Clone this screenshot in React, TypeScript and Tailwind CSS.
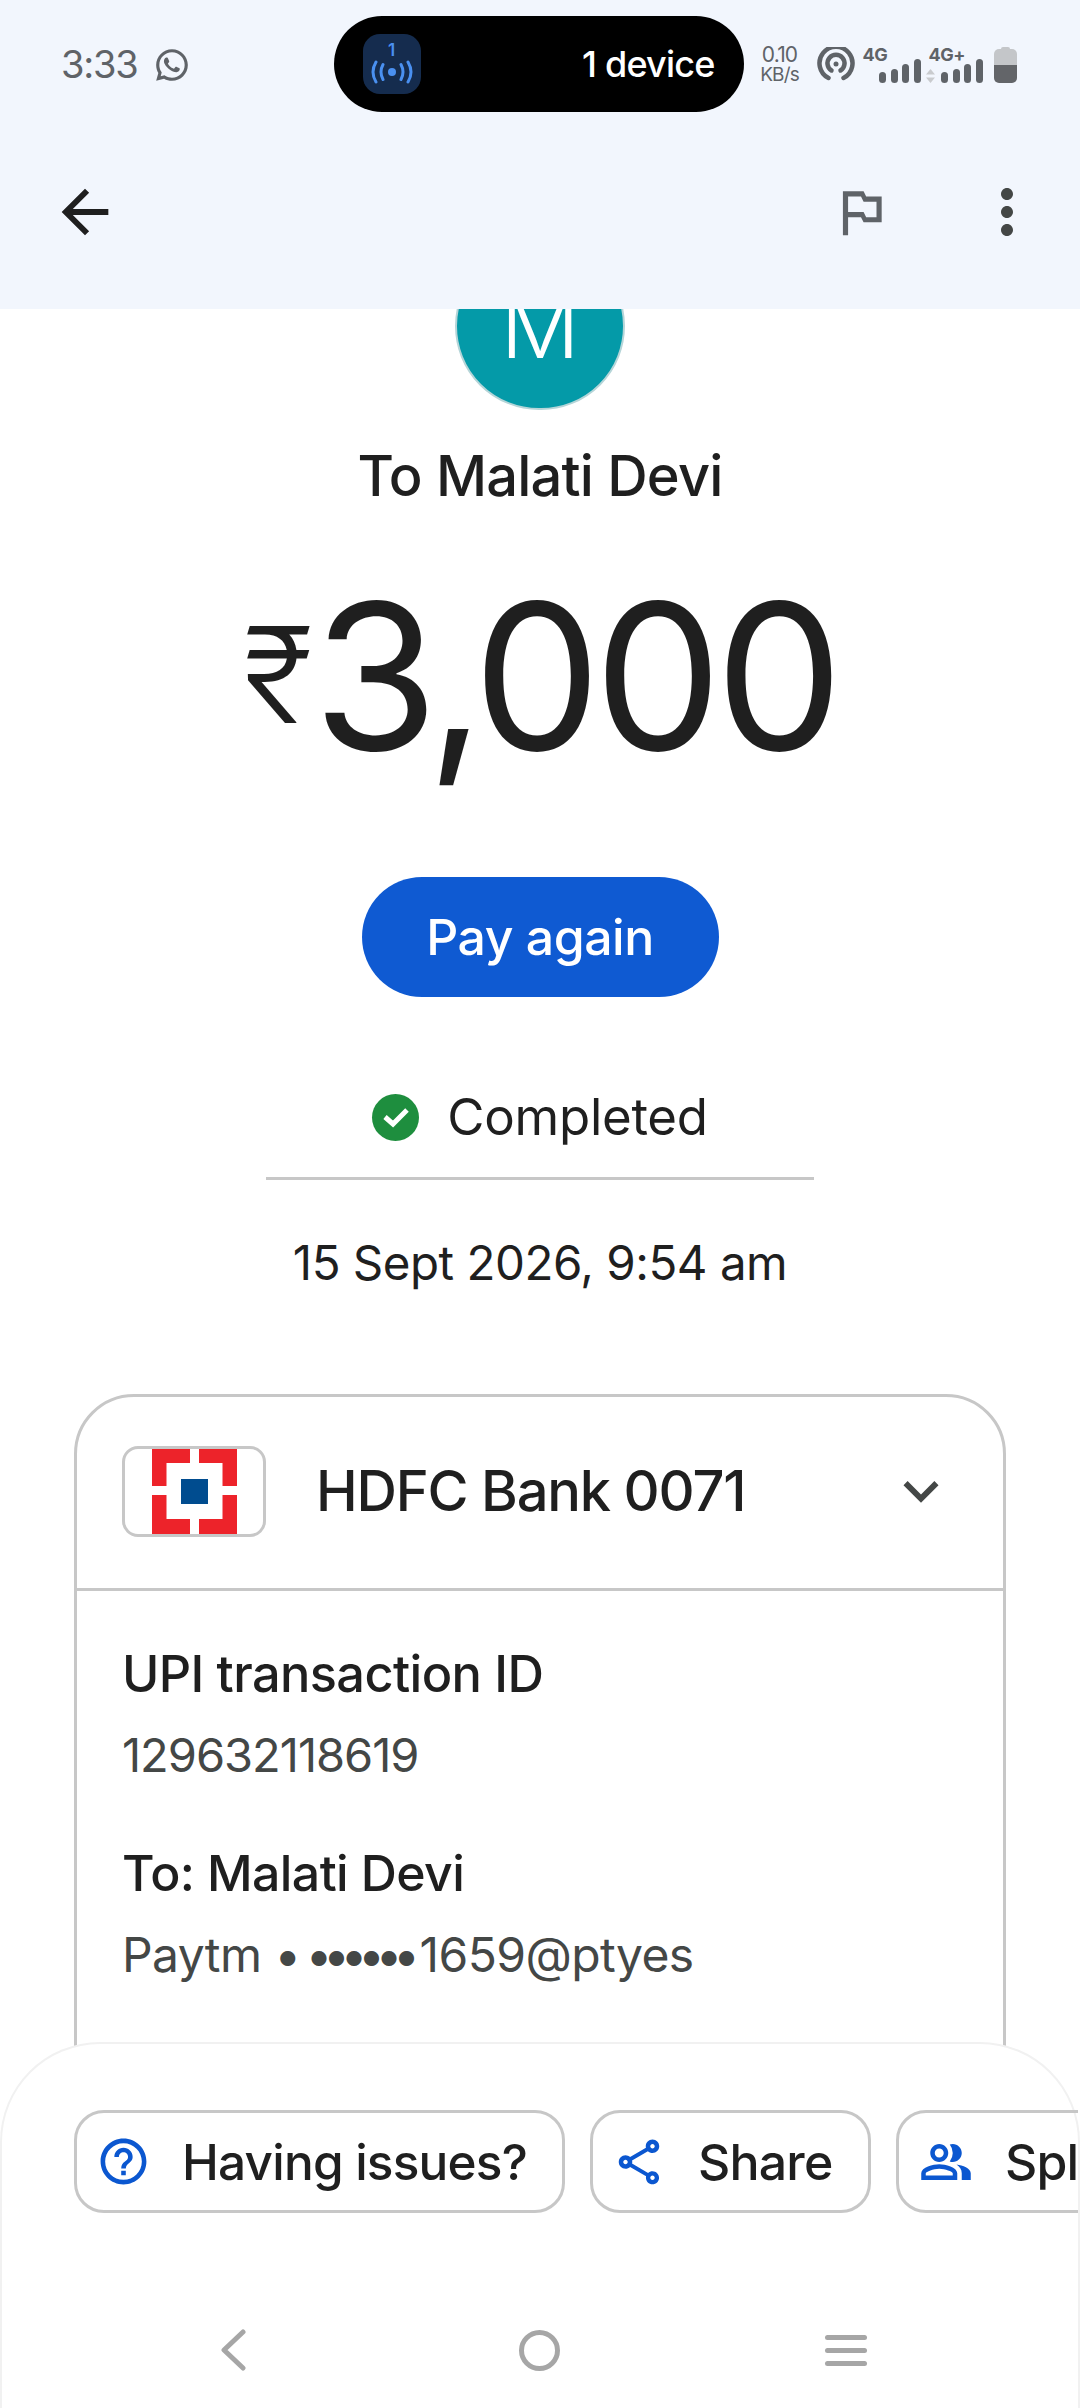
import { MdArrowBack, MdHelpOutline, MdKeyboardArrowDown, MdMoreVert, MdOutlinedFlag, MdOutlinePeopleAlt, MdOutlineShare } from "react-icons/md";
import { RiWhatsappLine } from "react-icons/ri";

function Bars({ fade }: { fade?: boolean }) {
  return (
    <div className="flex items-end gap-[4.5px]">
      {fade && (
        <svg width="9" height="14" viewBox="0 0 9 14" className="mr-[2px]">
          <path d="M4.5 0 9 5.5H0z M4.5 14 0 8.500H9z" fill="#c9cbce" />
        </svg>
      )}
      <div className="w-[7px] h-[11px] rounded-full bg-[#5f6368]" />
      <div className="w-[7px] h-[14px] rounded-full bg-[#5f6368]" />
      <div className="w-[7px] h-[19px] rounded-full bg-[#5f6368]" />
      <div className="w-[7px] h-[24px] rounded-full bg-[#5f6368]" />
    </div>
  );
}

function StatusBar() {
  return (
    <div className="flex items-center h-[96px] mt-[16px] text-[#5f6368]">
      <span className="ml-[61px] text-[38px] leading-[48px] tracking-[-1.2px]">3:33</span>
      <RiWhatsappLine className="ml-[15px] mt-[2px]" size={38} />
      {/* hotspot pill */}
      <div className="ml-[143px] w-[410px] h-[96px] rounded-full bg-black flex items-center justify-between pl-[29px] pr-[29px]">
        <div className="w-[58px] h-[60px] rounded-[17px] bg-[#152c4e] flex flex-col items-center text-[#4a90f0]">
          <span className="text-[17px] leading-[20px] mt-[6px] font-semibold">1</span>
          <svg width="42" height="24" viewBox="0 0 42 24" fill="none" stroke="#4a90f0" strokeWidth="3" strokeLinecap="round">
            <circle cx="21" cy="12" r="4" fill="#4a90f0" stroke="none" />
            <path d="M12 4.500Q8 12 12 19.500M30 4.500Q34 12 30 19.500M5 2Q-1 12 5 22M37 2Q43 12 37 22" />
          </svg>
        </div>
        <span className="text-[36px] leading-[44px] font-medium text-white tracking-[-0.8px]">1 device</span>
      </div>
      <div className="ml-[15px] w-[42px] flex flex-col items-center">
        <span className="text-[21px] leading-[21px] tracking-[-0.8px]">0.10</span>
        <span className="text-[19px] leading-[20px] tracking-[-0.8px]">KB/s</span>
      </div>
      <svg className="ml-[16px] mt-[2px]" width="38" height="36" viewBox="0 0 38 36" fill="none" stroke="#5f6368" strokeWidth="4.500" strokeLinecap="round">
        <circle cx="19" cy="17" r="2.500" fill="#5f6368" stroke="none" />
        <path d="M11.500 31A16.500 16.500 0 1 1 26.500 31" />
        <path d="M14.500 23.500A8.500 8.500 0 1 1 23.500 23.500" />
      </svg>
      <div className="ml-[8px] w-[58px] h-[36px] mt-[1px] flex flex-col">
        <span className="text-[18px] leading-[15px] font-bold tracking-[-0.5px] text-[#5f6368]">4G</span>
        <div className="flex justify-end -mt-[3px]"><Bars /></div>
      </div>
      <div className="ml-[8px] w-[54px] h-[36px] mt-[1px] flex flex-col">
        <span className="text-[18px] leading-[15px] font-bold tracking-[-0.5px] text-[#5f6368]">4G+</span>
        <div className="flex justify-end -mt-[3px]"><Bars fade /></div>
      </div>
      <div className="ml-[11px] mt-[1px] w-[23px] h-[36px] flex flex-col items-center">
        <div className="w-[9px] h-[2px] bg-[#c4c6c9] rounded-t-sm" />
        <div className="w-full h-[16px] bg-[#c4c6c9] rounded-t-[5px]" />
        <div className="w-full h-[18px] bg-[#636569] rounded-b-[5px]" />
      </div>
    </div>
  );
}

function Header() {
  return (
    <header className="h-[309px] shrink-0 bg-[#f2f6fd] relative z-10">
      <StatusBar />
      <div className="flex items-center mt-[64px] h-[72px] pl-[50px] pr-[37px]">
        <MdArrowBack size={70} className="text-[#1f1f1f]" />
        <MdOutlinedFlag size={62} className="ml-auto text-[#5f6368]" />
        <MdMoreVert size={72} className="ml-[79px] text-[#444746]" />
      </div>
    </header>
  );
}

function Details() {
  return (
    <div className="mx-[74px] mt-[101px] pb-[500px] border-[3px] border-[#c7c7c7] rounded-[60px]">
      <div className="h-[194px] pb-[3px] flex items-center pl-[45px] pr-[47px] border-b-[3px] border-[#c7c7c7]">
        <div className="w-[144px] h-[91px] border-[3px] border-[#c7c7c7] rounded-[16px] flex items-center justify-center overflow-hidden">
          {/* HDFC logo */}
          <svg width="85" height="86" viewBox="0 0 85 86">
            <rect width="85" height="86" fill="#ed232a" />
            <rect x="14.500" y="15" width="56" height="56" fill="#fff" />
            <rect x="38" width="9" height="86" fill="#fff" />
            <rect y="38" width="85" height="9" fill="#fff" />
            <rect x="29" y="31" width="27" height="25" fill="#004c8f" />
          </svg>
        </div>
        <span className="ml-[50px] text-[56px] leading-[64px] font-medium text-[#1f1f1f] tracking-[-1.2px]">HDFC Bank 0071</span>
        <MdKeyboardArrowDown size={70} className="ml-auto text-[#444746]" />
      </div>
      <div className="pl-[45px]">
        <div className="mt-[53px] text-[50.500px] leading-[60px] font-medium text-[#1f1f1f] tracking-[-0.6px]">UPI transaction ID</div>
        <div className="mt-[21px] text-[47px] leading-[60px] text-[#444746] tracking-[-1px]">129632118619</div>
        <div className="mt-[58px] text-[50px] leading-[60px] font-medium text-[#1f1f1f] tracking-[-0.6px]">To: Malati Devi</div>
        <div className="mt-[22px] text-[48px] leading-[60px] text-[#444746] tracking-[-0.6px]">Paytm • <span className="tracking-[-9.500px] ml-[-8px] mr-[9px]">••••••</span>1659@ptyes</div>
      </div>
    </div>
  );
}

function Sheet() {
  return (
    <div className="absolute bottom-0 left-0 right-0 h-[366px] z-20 bg-white rounded-t-[100px] border-t-[2px] border-x-[2px] border-[#f1f1f1]">
      <div className="flex gap-[25px] pl-[72px] mt-[66px] overflow-hidden">
        <div className="h-[103px] w-[491px] shrink-0 flex items-center pl-[19px] border-[3px] border-[#c7c7c7] rounded-[30px]">
          <MdHelpOutline size={55} className="text-[#0b57d0]" />
          <span className="ml-[31px] text-[49.500px] leading-[60px] font-medium text-[#1f1f1f] tracking-[-0.8px]">Having issues?</span>
        </div>
        <div className="h-[103px] w-[281px] shrink-0 flex items-center pl-[19px] border-[3px] border-[#c7c7c7] rounded-[30px]">
          <MdOutlineShare size={54} className="text-[#0b57d0]" />
          <span className="ml-[32px] text-[50px] leading-[60px] font-medium text-[#1f1f1f] tracking-[-0.8px]">Share</span>
        </div>
        <div className="h-[103px] w-[300px] shrink-0 flex items-center pl-[20px] border-[3px] border-[#c7c7c7] rounded-[30px]">
          <MdOutlinePeopleAlt size={54} className="text-[#0b57d0]" />
          <span className="ml-[32px] text-[50px] leading-[60px] font-medium text-[#1f1f1f] tracking-[-0.8px]">Split</span>
        </div>
      </div>
      {/* android nav */}
      <div className="flex items-center mt-[115px] h-[44px] pl-[216px]">
        <svg width="32" height="42" viewBox="0 0 32 42" fill="none" stroke="#a6a6a6" strokeWidth="5" strokeLinecap="round" strokeLinejoin="round">
          <path d="M25 3 6 21l19 18" />
        </svg>
        <div className="ml-[269px] w-[41px] h-[41px] rounded-full border-[5px] border-[#a6a6a6]" />
        <div className="ml-[265px] w-[42px] flex flex-col gap-[8px]">
          <div className="h-[5px] rounded-full bg-[#a6a6a6]" />
          <div className="h-[5px] rounded-full bg-[#a6a6a6]" />
          <div className="h-[5px] rounded-full bg-[#a6a6a6]" />
        </div>
      </div>
    </div>
  );
}

export default function App() {
  return (
    <div className="relative w-[1080px] h-[2408px] overflow-hidden bg-white flex flex-col font-['Inter',sans-serif]">
      <Header />
      <main className="flex-1 min-h-0 overflow-hidden">
        <div className="flex flex-col items-stretch">
          <div className="self-center mt-[-67px] w-[170px] h-[168px] rounded-full bg-[#049aa8] border-[2px] border-[#b5d5d8] flex items-center justify-center">
            <span className="text-[88px] leading-none font-light text-white">M</span>
          </div>
          <div className="mt-[36px] text-center text-[56px] leading-[60px] font-medium text-[#1f1f1f] tracking-[-0.8px]">To Malati Devi</div>
          <div className="mt-[59px] text-center text-[203px] leading-[220px] font-normal text-[#1f1f1f] tracking-[-7px] whitespace-nowrap">
            <span className="text-[133px] font-light align-[27px] tracking-normal">₹</span>3,000
          </div>
          <div className="self-center mt-[91px] w-[357px] h-[120px] rounded-full bg-[#0f5ad2] flex items-center justify-center">
            <span className="text-[50px] leading-[60px] font-medium text-white tracking-[-0.5px]">Pay again</span>
          </div>
          <div className="mt-[90px] h-[60px] flex items-center justify-center text-[#1f1f1f]">
            <div className="w-[47px] h-[47px] rounded-full bg-[#1e8e3e] flex items-center justify-center">
              <svg width="28" height="22" viewBox="0 0 28 22" fill="none" stroke="#fff" strokeWidth="5">
                <path d="M3 11l8 7L25 4" />
              </svg>
            </div>
            <span className="ml-[28px] text-[51px] leading-[60px] tracking-[-0.3px]">Completed</span>
          </div>
          <div className="self-center mt-[30px] w-[548px] h-[3px] bg-[#c7c7c7]" />
          <div className="mt-[53px] text-center text-[47.500px] leading-[60px] text-[#1f1f1f] tracking-[-0.5px]">15 Sept 2026, 9:54 am</div>
          <Details />
        </div>
      </main>
      <Sheet />
    </div>
  );
}
